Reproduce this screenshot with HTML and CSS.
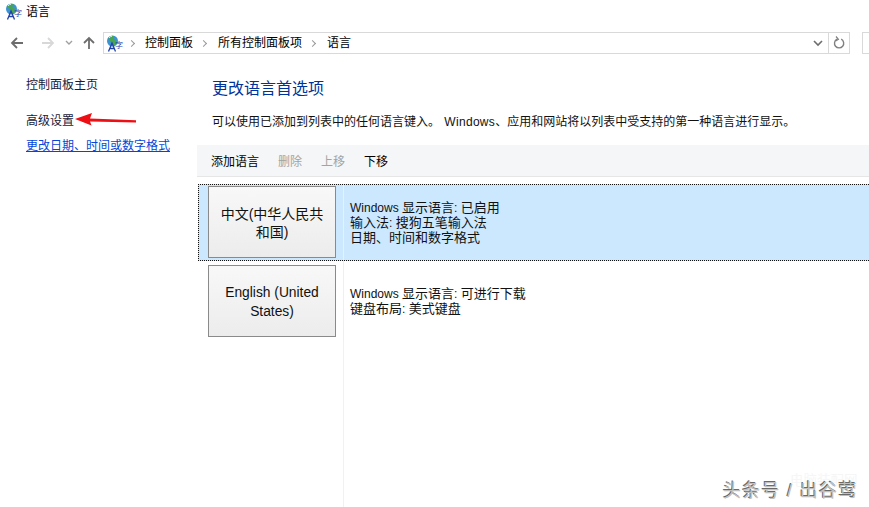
FILE: index.html
```html
<!DOCTYPE html>
<html lang="zh-CN">
<head>
<meta charset="utf-8">
<title>语言</title>
<link rel="stylesheet" href="styles.css">
</head>
<body>
<div class="window">
  <header class="titlebar">
    <svg class="lang-icon" viewBox="0 0 17 17" width="17" height="17"><circle cx="6.5" cy="6" r="5.5" fill="#3b93d4"/><path d="M2.500 3C4 1 7 .5 8 1.500s-1.500 2-.5 3 3.500.5 3.500 2.500-2 3.500-3 3.500-1-2-2-3-3-2.500-3.500-4.500z" fill="#49a64f"/><path d="M3 2.800a5 5 0 0 1 3-1.600" stroke="#dff3fb" fill="none"/><path d="M2.500 16.500L6 8l3.500 8.500M3.800 13.500h4.500" stroke="#2443a8" stroke-width="1.300" fill="none"/><text x="9" y="13" class="icon-zi">字</text></svg>
    <span class="title">语言</span>
  </header>
  <nav class="navbar">
    <div class="nav-buttons">
      <svg class="nav-back" viewBox="0 0 14 14" width="14" height="14"><path d="M13 7H2M7 2L2 7l5 5" stroke="#6d6d6d" stroke-width="1.8" fill="none"/></svg>
      <svg class="nav-forward" viewBox="0 0 14 14" width="14" height="14"><path d="M1 7h11M7 2l5 5-5 5" stroke="#d8d8d8" stroke-width="1.8" fill="none"/></svg>
      <svg class="nav-drop" viewBox="0 0 8 6" width="8" height="6"><path d="M1 1l3 3 3-3" stroke="#a0a0a0" stroke-width="1.400" fill="none"/></svg>
      <svg class="nav-up" viewBox="0 0 14 14" width="14" height="14"><path d="M7 13V2M2 7l5-5 5 5" stroke="#6d6d6d" stroke-width="1.8" fill="none"/></svg>
    </div>
    <div class="address">
      <svg class="lang-icon" viewBox="0 0 17 17" width="17" height="17"><circle cx="6.5" cy="6" r="5.5" fill="#3b93d4"/><path d="M2.500 3C4 1 7 .5 8 1.500s-1.500 2-.5 3 3.500.5 3.500 2.500-2 3.500-3 3.500-1-2-2-3-3-2.500-3.500-4.500z" fill="#49a64f"/><path d="M3 2.800a5 5 0 0 1 3-1.600" stroke="#dff3fb" fill="none"/><path d="M2.500 16.500L6 8l3.500 8.500M3.800 13.500h4.500" stroke="#2443a8" stroke-width="1.300" fill="none"/><text x="9" y="13" class="icon-zi">字</text></svg>
      <span class="crumb-sep sep-first"></span>
      <span class="crumb">控制面板</span>
      <span class="crumb-sep"></span>
      <span class="crumb">所有控制面板项</span>
      <span class="crumb-sep"></span>
      <span class="crumb">语言</span>
      <span class="address-fill"></span>
      <svg class="addr-chevron" viewBox="0 0 10 7" width="10" height="7"><path d="M1 1l4 4 4-4" stroke="#6d6d6d" stroke-width="1.600" fill="none"/></svg>
      <span class="refresh">
        <svg viewBox="0 0 12 14" width="12" height="14"><path d="M4 3.200a4.600 4.600 0 1 0 4.200 0" stroke="#808080" stroke-width="1.400" fill="none"/><path d="M3 .5l2.400 2.800L2.600 5" stroke="#808080" stroke-width="1.200" fill="none"/></svg>
      </span>
    </div>
    <div class="search"></div>
  </nav>
  <div class="main">
    <aside class="side">
      <a class="side-link first">控制面板主页</a>
      <a class="side-link second">高级设置</a>
      <a class="side-link blue">更改日期、时间或数字格式</a>
    </aside>
    <section class="content">
      <h1 class="heading">更改语言首选项</h1>
      <p class="desc">可以使用已添加到列表中的任何语言键入。 <span class="desc-latin">Windows</span>、应用和网站将以列表中受支持的第一种语言进行显示。</p>
      <div class="toolbar">
        <span class="tool">添加语言</span>
        <span class="tool off">删除</span>
        <span class="tool off">上移</span>
        <span class="tool">下移</span>
      </div>
      <div class="list">
        <div class="row selected">
          <div class="lang-cell"><div class="lang-btn">中文(中华人民共和国)</div></div>
          <div class="info">
            <div class="info-line"><span class="latin">Windows </span>显示语言<span class="latin">: </span>已启用</div>
            <div class="info-line">输入法<span class="latin">: </span>搜狗五笔输入法</div>
            <div class="info-line">日期、时间和数字格式</div>
          </div>
        </div>
        <div class="row plain">
          <div class="lang-cell"><div class="lang-btn">English (United States)</div></div>
          <div class="info">
            <div class="info-line"><span class="latin">Windows </span>显示语言<span class="latin">: </span>可进行下载</div>
            <div class="info-line">键盘布局<span class="latin">: </span>美式键盘</div>
          </div>
        </div>
        <div class="rest"></div>
      </div>
    </section>
  </div>
  <svg class="arrow" viewBox="0 0 62 13" width="62" height="13"><path d="M0 6L17 0 15 5.500 61 7.200v2.300L15 8.500 16.500 12.500z" fill="#ee0f14"/></svg>
  <div class="mark-faint">电脑装配网</div>
  <div class="mark">头条号 / 出谷莺</div>
</div>
</body>
</html>
```
FILE: styles.css
```css
* { box-sizing: border-box; }
html, body { margin: 0; padding: 0; }
body { background: #fff; font-family: "Liberation Sans", "Noto Sans CJK SC", sans-serif; color: #111; font-size: 12px; }
.window { position: relative; width: 869px; height: 507px; overflow: hidden; background: #fff; }

.titlebar { height: 32px; display: flex; align-items: flex-start; padding: 3px 0 0 5px; }
.titlebar .title { margin-left: 4px; margin-top: 1px; line-height: 16px; font-size: 12px; color: #000; }
.lang-icon { flex: none; display: block; }
.icon-zi { font-size: 8px; fill: #1f3fa8; font-family: "Noto Sans CJK SC", sans-serif; }

.navbar { height: 22px; display: flex; align-items: center; }
.nav-buttons { width: 103px; flex: none; display: flex; align-items: center; padding-left: 10px; }
.nav-forward { margin-left: 17px; }
.nav-drop { margin-left: 10px; }
.nav-up { margin-left: 9px; }

.address { width: 747px; height: 22px; flex: none; display: flex; align-items: center; border: 1px solid #d9d9d9; padding-left: 2px; }
.crumb { font-size: 12px; color: #000; line-height: 20px; }
.crumb-sep { width: 5px; height: 5px; border-top: 1.5px solid #999; border-right: 1.5px solid #999; transform: rotate(45deg); margin: 0 12px 0 8px; flex: none; }
.crumb-sep.sep-first { margin: 0 11px 0 6px; }
.address-fill { flex: 1; }
.addr-chevron { margin-right: 5px; }
.refresh { width: 21px; height: 20px; border-left: 1px solid #d9d9d9; display: flex; align-items: center; justify-content: center; }
.search { width: 7px; height: 22px; margin-left: 12px; flex: none; border: 1px solid #d9d9d9; border-right: 0; }

.main { display: flex; height: 452px; margin-top: 1px; }
.side { width: 197px; flex: none; padding-left: 26px; }
.side-link { display: block; font-size: 12px; line-height: 16px; color: #1a1a3a; }
.side-link.first { margin-top: 22px; }
.side-link.second { margin-top: 20px; }
.side-link.blue { margin-top: 9px; color: #0645d8; text-decoration: underline; }

.content { flex: 1; min-width: 0; }
.heading { margin: 23px 0 0 15px; font-size: 16px; font-weight: 400; line-height: 22px; color: #003399; }
.desc { margin: 14px 0 0 15px; font-size: 12px; line-height: 16px; white-space: nowrap; color: #111; word-spacing: 1px; }
.desc-latin { letter-spacing: 0.3px; }

.toolbar { height: 32px; margin-top: 15px; background: #f5f6f7; border-bottom: 1px solid #e6e6e6; display: flex; align-items: center; padding-left: 14px; gap: 19px; }
.tool { font-size: 12px; color: #000; }
.tool.off { color: #a3a3a3; }

.list { margin-top: 7px; margin-left: 1px; display: flex; flex-direction: column; height: 323px; }
.row { display: flex; }
.row.selected { height: 77px; background: #cce8ff; border: 1px dotted #111; border-right: 0; }
.row.plain { height: 80px; }
.lang-cell { width: 145px; flex: none; border-right: 1px solid #e8f1fa; padding: 1px 7px 0 9px; }
.row.plain .lang-cell { width: 146px; padding-top: 4px; padding-left: 10px; }
.lang-btn { width: 128px; height: 72px; border: 1px solid #8a8a8a; background: linear-gradient(#f8f8f8, #ececec); display: flex; align-items: center; justify-content: center; text-align: center; font-size: 14px; line-height: 18px; padding: 1px 9px 0; color: #111; }
.row.plain .lang-btn { font-size: 13.8px; line-height: 19px; }
.info { padding-left: 6px; display: flex; flex-direction: column; justify-content: center; font-size: 13px; color: #111; white-space: nowrap; }
.info-line { height: 15px; line-height: 15px; }
.latin { font-size: 12px; }
.rest { flex: 1; margin-left: 145px; border-left: 1px solid #edf2f8; }

.arrow { position: absolute; left: 75px; top: 113px; }
.mark { position: absolute; left: 723px; top: 479px; font-size: 18px; line-height: 24px; letter-spacing: 1.3px; color: #c0c0c0; text-shadow: -1px -1px 0 #6a6a6a, 1px 1px 0 #fff; white-space: nowrap; }
.mark-faint { position: absolute; left: 790px; top: 472px; font-size: 13.5px; line-height: 18px; color: #f6f6f6; white-space: nowrap; }
```
